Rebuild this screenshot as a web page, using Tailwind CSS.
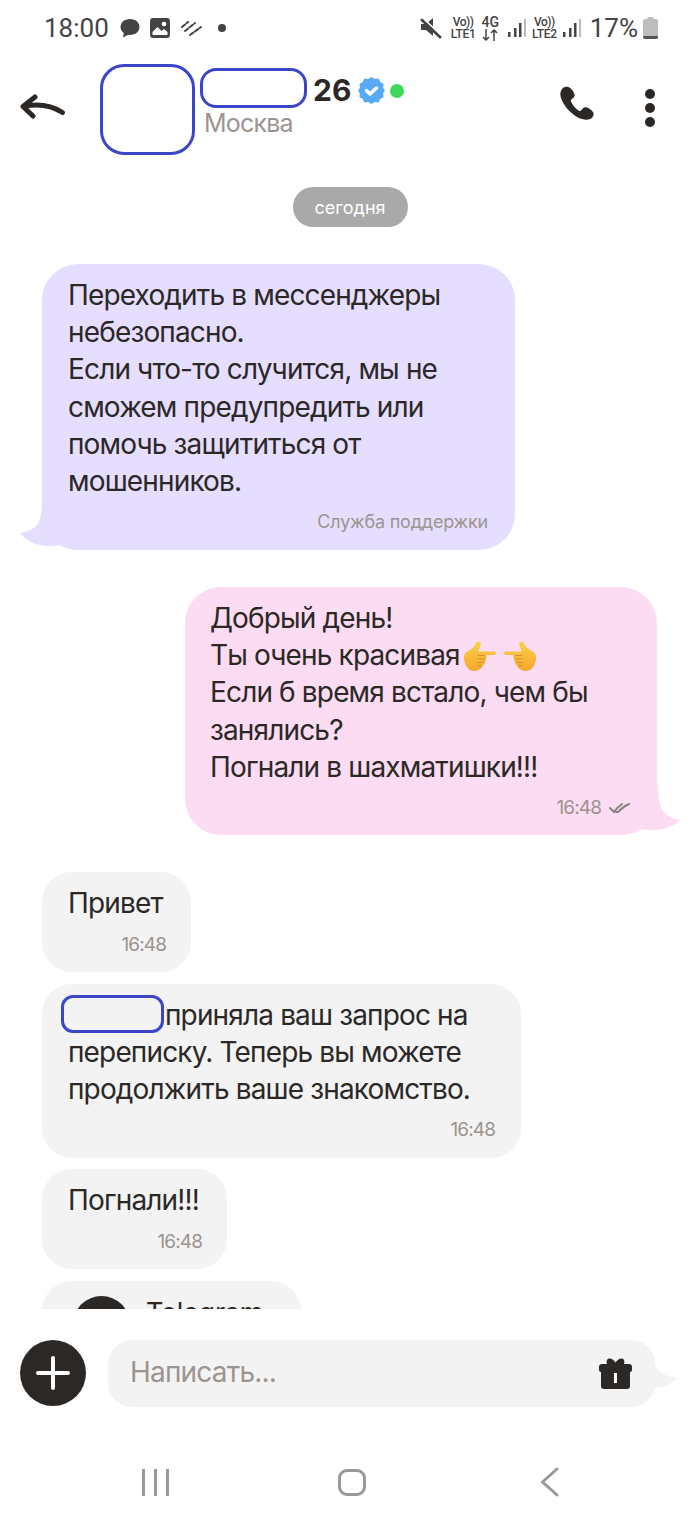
<!DOCTYPE html>
<html lang="ru"><head><meta charset="utf-8">
<script src="https://cdn.jsdelivr.net/npm/@tailwindcss/browser@4"></script>
</head>
<body class="bg-white">
<div class="w-[700px] h-[1517px] overflow-hidden flex flex-col bg-white text-[#2b2826] font-['Inter','Noto_Sans',sans-serif]">

  <!-- status bar -->
  <div class="h-[56px] shrink-0 flex items-center pl-[44px] pr-[42px] text-[#444] font-['Roboto',sans-serif]">
    <span class="text-[26px] leading-none">18:00</span>
    <svg class="ml-[10px]" width="22" height="22" viewBox="0 0 22 22"><path fill="#444" d="M11 2C5.500 2 1.500 5.600 1.500 10c0 2.500 1.300 4.600 3.300 6.100L4 20.500l5.200-2.700c.6.100 1.200.2 1.800.2 5.500 0 9.500-3.600 9.500-8s-4-8-9.500-8z"/></svg>
    <svg class="ml-[8px]" width="22" height="22" viewBox="0 0 22 22"><rect x="1" y="1" width="20" height="20" rx="3" fill="#444"/><circle cx="15" cy="7" r="2.300" fill="#fff"/><path fill="#fff" d="M3.500 18v-3l5-5 4 4 2.500-2 3.500 3v3z"/></svg>
    <svg class="ml-[10px]" width="22" height="20" viewBox="0 0 22 20"><path stroke="#444" stroke-width="2" stroke-linecap="round" stroke-dasharray="4 2" fill="none" d="M1 9 7 4M4 13 14 5M9 17 20 9"/></svg>
    <span class="ml-[15px] w-[8px] h-[8px] rounded-full bg-[#444]"></span>
    <svg class="ml-auto" width="22" height="24" viewBox="0 0 22 24"><path fill="#444" d="M1 8h5l7-6v18l-7-6H1z"/><path stroke="#444" stroke-width="3" stroke-linecap="round" d="M2 4l18 17"/><path stroke="#fff" stroke-width="1.500" d="M4 3l17 16"/></svg>
    <div class="ml-[9px] flex flex-col items-center leading-[12px] text-[12px] font-medium"><span class="tracking-[-0.5px]">Vo))</span><span class="tracking-[-0.3px]">LTE1</span></div>
    <div class="ml-[6px] flex flex-col items-center leading-[13px] text-[14px] font-medium">
      <span>4G</span>
      <svg width="16" height="12" viewBox="0 0 16 12"><path fill="none" stroke="#444" stroke-width="1.500" d="M4 0v11M1 8l3 3 3-3M12 12V1M9 4l3-3 3 3"/></svg>
    </div>
    <svg class="ml-[9px]" width="18" height="20" viewBox="0 0 18 20"><rect x="0" y="14" width="2.500" height="5" fill="#444"/><rect x="6" y="10" width="2.500" height="9" fill="#444"/><rect x="11" y="5" width="2.500" height="14" fill="#444"/><rect x="16" y="1" width="2" height="18" fill="#bbb"/></svg>
    <div class="ml-[6px] flex flex-col items-center leading-[12px] text-[12px] font-medium"><span class="tracking-[-0.5px]">Vo))</span><span class="tracking-[-0.3px]">LTE2</span></div>
    <svg class="ml-[6px]" width="18" height="20" viewBox="0 0 18 20"><rect x="0" y="14" width="2.500" height="5" fill="#444"/><rect x="6" y="10" width="2.500" height="9" fill="#444"/><rect x="11" y="5" width="2.500" height="14" fill="#444"/><rect x="16" y="1" width="2" height="18" fill="#bbb"/></svg>
    <span class="ml-[9px] text-[26px] leading-none">17%</span>
    <svg class="ml-[5px]" width="15" height="22" viewBox="0 0 15 22"><path fill="#bdbdbd" d="M4.500 0h6v2H13a2 2 0 0 1 2 2v16a2 2 0 0 1-2 2H2a2 2 0 0 1-2-2V4a2 2 0 0 1 2-2h2.500z"/><path fill="#555" d="M0 19h15v1a2 2 0 0 1-2 2H2a2 2 0 0 1-2-2z"/></svg>
  </div>

  <!-- header -->
  <div class="h-[104px] shrink-0 flex items-start relative">
    <svg class="ml-[20px] mt-[38px]" width="46" height="30" viewBox="0 0 46 30"><path fill="none" stroke="#2b2826" stroke-width="5" stroke-linecap="round" stroke-linejoin="round" d="M15 3 3 12.500 13 22M3.500 12.500c14-3 28-1 39 6"/></svg>
    <div class="ml-[34px] mt-[8px] w-[95px] h-[91px] rounded-[24px] border-[3px] border-[#3b45c9]"></div>
    <div class="ml-[5px] mt-[12px] flex flex-col">
      <div class="flex items-start">
        <div class="w-[107px] h-[40px] rounded-[16px] border-[3px] border-[#3b45c9]"></div>
        <span class="ml-[6px] mt-[2px] text-[30px] leading-[40px] font-bold">26</span>
        <svg class="ml-[7px] mt-[9px]" width="27" height="27" viewBox="0 0 27 27"><path fill="#58aaf5" d="M13.500 0l3.300 2 3.800-.4 1.700 3.400 3.300 1.900-.5 3.800 1.900 2.800-1.900 2.800.5 3.800-3.300 1.900-1.700 3.400-3.800-.4-3.300 2-3.300-2-3.800.4L4.700 22.100l-3.300-1.900.5-3.800L0 13.500l1.900-2.800-.5-3.800L4.700 5l1.700-3.400 3.800.4z"/><path fill="none" stroke="#fff" stroke-width="3.400" stroke-linecap="round" stroke-linejoin="round" d="M8.500 13.500l3.500 3.500 6.500-6"/></svg>
        <span class="ml-[5px] mt-[16px] w-[14px] h-[14px] rounded-full bg-[#3dd95c]"></span>
      </div>
      <span class="ml-[4px] mt-[0px] text-[25px] leading-[26px] tracking-[-0.8px] text-[#9c9490]">Москва</span>
    </div>
    <svg class="absolute left-[560px] top-[30px]" width="34" height="34" viewBox="0 0 34 34"><path fill="#2b2826" d="M8.500 1C6 .2 3.500 1 2 3 .3 5.500-.2 8.500 1 12c2.500 7.500 9 15 17 19.500 4 2 8.500 3 12 1.500 2.500-1 4-3.500 3.500-6-.4-1.700-4.500-5-7-5.700-1.500-.4-3 .2-4 1.400l-1.500 1.800c-.6.600-1.400.7-2.100.3-3.200-2-6.400-5.700-8-9.500-.3-.8 0-1.500.6-2l1.600-1.200c1.300-1 1.700-2.500 1.300-4C13.900 6 11 1.800 8.500 1z"/></svg>
    <div class="absolute left-[645px] top-[33px] flex flex-col gap-[4px]">
      <span class="w-[10px] h-[10px] rounded-full bg-[#2b2826]"></span>
      <span class="w-[10px] h-[10px] rounded-full bg-[#2b2826]"></span>
      <span class="w-[10px] h-[10px] rounded-full bg-[#2b2826]"></span>
    </div>
  </div>

  <!-- messages -->
  <div class="h-[1149px] shrink-0 overflow-hidden flex flex-col px-[42px] pt-[27px]">
    <div class="self-center shrink-0 w-[115px] h-[40px] rounded-full bg-[#a9a9a9] text-white text-[18px] flex items-center justify-center">сегодня</div>

    <div class="relative shrink-0 mt-[37px] w-[473px] h-[286px] rounded-[36px] bg-[#e6defe] pl-[26px] pt-[13px] text-[28px] leading-[37.2px] tracking-[-0.85px]">
      <svg class="absolute left-[-22px] bottom-0" width="60" height="50" viewBox="0 0 60 50"><path fill="#e6defe" d="M22 0C22 25 16 30 0 33 8 44 25 48 40 45 46 48 52 50 60 50V0z"/></svg>
      <p class="relative">Переходить в мессенджеры<br>небезопасно.<br>Если что-то случится, мы не<br>сможем предупредить или<br>помочь защититься от<br>мошенников.</p>
      <span class="absolute right-[27px] bottom-[16px] text-[18px] leading-[24px] tracking-[-0.2px] text-[#9c9490]">Служба поддержки</span>
    </div>

    <div class="relative shrink-0 mt-[37px] self-end mr-[1px] w-[472px] h-[248px] rounded-[36px] bg-[#fbdcf2] pl-[25px] pt-[13px] text-[28px] leading-[37.2px] tracking-[-0.85px]">
      <svg class="absolute right-[-23px] bottom-0 -scale-x-100" width="60" height="50" viewBox="0 0 60 50"><path fill="#fbdcf2" d="M22 0C22 25 16 32 0 35 8 44 25 47 40 44 46 47 52 50 60 50V0z"/></svg>
      <p class="relative">Добрый день!<br><span class="inline-flex items-center align-top">Ты очень красивая
        <svg class="ml-[3px]" width="34" height="30" viewBox="0 0 34 30"><defs><linearGradient id="hand" x1="0" y1="0" x2="0" y2="1"><stop offset="0" stop-color="#fbd04a"/><stop offset="1" stop-color="#f3a72c"/></linearGradient></defs><path fill="url(#hand)" d="M1 16C1 11 6 10 10 7 12 5 13 1 15 .5c2-.5 3 1.500 2.500 4C17 6 16 8 15.500 10.500H31c2.500 0 2.500 3.500 0 3.500H23c1 1 1 3-.5 3.500 1 1 .5 3-.8 3.500.5 1.500-.3 3-1.700 3.300C19 27 16 30 12 30 5 30 1 24 1 16z"/><path fill="none" stroke="#d6932a" stroke-width="1" d="M15 14.500h7M15 18h7M14.500 21.500h6M14 25h5"/></svg>
        <svg class="ml-[6px] -scale-x-100" width="34" height="30" viewBox="0 0 34 30"><path fill="url(#hand)" d="M1 16C1 11 6 10 10 7 12 5 13 1 15 .5c2-.5 3 1.500 2.500 4C17 6 16 8 15.500 10.500H31c2.500 0 2.500 3.500 0 3.500H23c1 1 1 3-.5 3.500 1 1 .5 3-.8 3.500.5 1.500-.3 3-1.700 3.300C19 27 16 30 12 30 5 30 1 24 1 16z"/><path fill="none" stroke="#d6932a" stroke-width="1" d="M15 14.500h7M15 18h7M14.500 21.500h6M14 25h5"/></svg>
      </span><br>Если б время встало, чем бы<br>занялись?<br>Погнали в шахматишки!!!</p>
      <div class="absolute right-[26px] bottom-[15px] flex items-center gap-[8px] text-[19px] leading-[24px] tracking-[-0.9px] text-[#9c9490]">
        <span>16:48</span>
        <svg width="22" height="12" viewBox="0 0 22 12"><path fill="none" stroke="#8a8380" stroke-width="2" stroke-linecap="round" d="M1 6l4 4c2-3 5-6 8-8M7 10c1 0 1 0 2 0 3-3 6-6 11-8"/></svg>
      </div>
    </div>

    <div class="relative shrink-0 mt-[37px] w-[149px] h-[100px] rounded-[30px] bg-[#f3f3f3] pl-[26px] pt-[13px] text-[28px] leading-[37.2px] tracking-[-0.85px]">
      <p>Привет</p>
      <span class="absolute right-[25px] bottom-[15px] text-[19px] leading-[24px] tracking-[-0.9px] text-[#9c9490]">16:48</span>
    </div>

    <div class="relative shrink-0 mt-[12px] w-[479px] h-[174px] rounded-[30px] bg-[#f3f3f3] pl-[26px] pt-[13px] text-[28px] leading-[37.2px] tracking-[-0.85px]">
      <span class="absolute left-[19px] top-[11px] w-[103px] h-[38px] rounded-[12px] border-[3px] border-[#3b45c9]"></span>
      <p><span class="inline-block w-[97px]"></span>приняла ваш запрос на<br>переписку. Теперь вы можете<br>продолжить ваше знакомство.</p>
      <span class="absolute right-[26px] bottom-[16px] text-[19px] leading-[24px] tracking-[-0.9px] text-[#9c9490]">16:48</span>
    </div>

    <div class="relative shrink-0 mt-[11px] w-[185px] h-[100px] rounded-[30px] bg-[#f3f3f3] pl-[26px] pt-[13px] text-[28px] leading-[37.2px] tracking-[-0.85px]">
      <p>Погнали!!!</p>
      <span class="absolute right-[25px] bottom-[15px] text-[19px] leading-[24px] tracking-[-0.9px] text-[#9c9490]">16:48</span>
    </div>

    <div class="mt-[12px] w-[259px] h-[100px] shrink-0 rounded-[30px] bg-[#f3f3f3] flex items-start pl-[31px] pt-[15px]">
      <span class="w-[57px] h-[57px] rounded-full bg-[#2b2826] shrink-0"></span>
      <span class="ml-[16px] text-[27px] leading-[34px] tracking-[-0.2px]">Telegram</span>
    </div>
  </div>

  <!-- composer -->
  <div class="h-[98px] shrink-0 flex items-start pl-[20px] pt-[31px]">
    <div class="w-[66px] h-[66px] rounded-full bg-[#2b2826] flex items-center justify-center">
      <svg width="34" height="34" viewBox="0 0 34 34"><path stroke="#fff" stroke-width="4" stroke-linecap="round" d="M17 2v30M2 17h30"/></svg>
    </div>
    <div class="relative ml-[22px] w-[547px] h-[67px] rounded-[24px] bg-[#f3f3f3] flex items-center pl-[22px] pb-[4px]">
      <span class="text-[28px] tracking-[-0.8px] text-[#9c9490]">Написать...</span>
      <svg class="absolute right-[23px] top-[18px]" width="33" height="31" viewBox="0 0 33 31"><path fill="#2b2826" d="M3 6h5C7 3 8 .5 10.500 .5c2.500 0 4.500 2 6 4 1.500-2 3.500-4 6-4C25 .5 26 3 25 6h5a3 3 0 0 1 3 3v3a2 2 0 0 1-2 2v14a3 3 0 0 1-3 3H5a3 3 0 0 1-3-3V14a2 2 0 0 1-2-2V9a3 3 0 0 1 3-3z"/><rect x="15" y="15" width="3" height="10" fill="#fff"/></svg>
      <svg class="absolute right-[-23px] top-[18px]" width="24" height="32" viewBox="0 0 24 32"><path fill="#f3f3f3" d="M0 0C1 12 6 18 23 19 18 26 10 30 0 30z"/></svg>
    </div>
  </div>

  <!-- nav -->
  <div class="flex-1 relative">
    <div class="absolute left-[142px] top-[62px] flex gap-[9px]">
      <span class="w-[3px] h-[27px] bg-[#999]"></span>
      <span class="w-[3px] h-[27px] bg-[#999]"></span>
      <span class="w-[3px] h-[27px] bg-[#999]"></span>
    </div>
    <div class="absolute left-[338px] top-[62px] w-[28px] h-[27px] rounded-[9px] border-[3px] border-[#999]"></div>
    <svg class="absolute left-[540px] top-[60px]" width="19" height="30" viewBox="0 0 19 30"><path fill="none" stroke="#999" stroke-width="3" stroke-linecap="round" stroke-linejoin="round" d="M17 2 2.500 15 17 28"/></svg>
  </div>
</div>
</body></html>
